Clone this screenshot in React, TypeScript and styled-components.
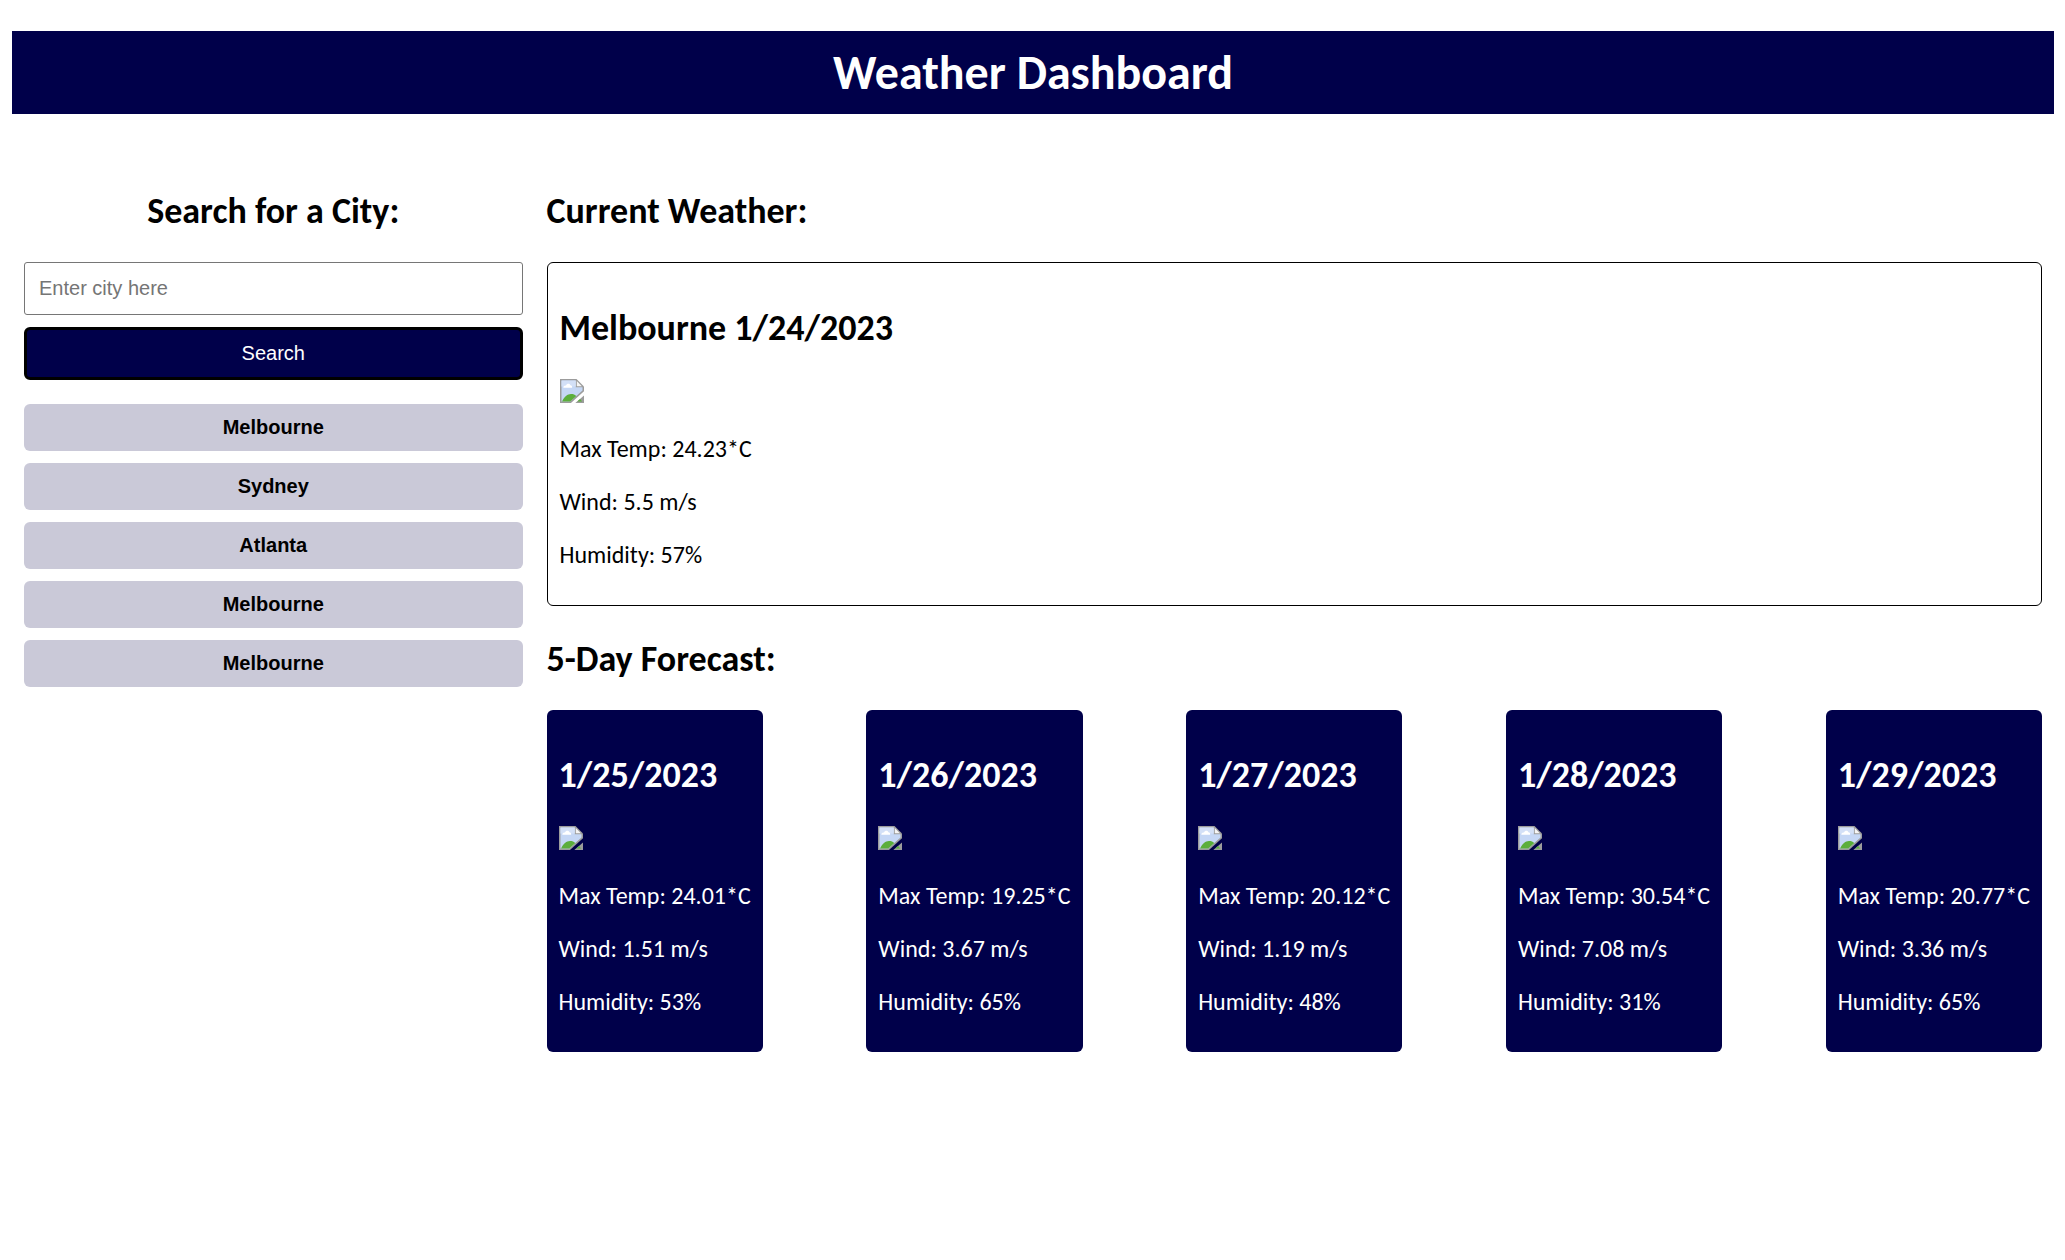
import React from "react";
import styled, { createGlobalStyle } from "styled-components";

const NAVY = "#00004a";

const GlobalStyle = createGlobalStyle`
  * { box-sizing: border-box; }
  body {
    margin: 0;
    padding: 0 11px 0 12px;
    background: #ffffff;
    color: #000000;
    font-family: Carlito, Lato, "Open Sans", sans-serif;
    font-size: 24px;
    line-height: 29px;
  }
`;

const Header = styled.header`
  margin-top: 31px;
  padding: 12px;
  background: ${NAVY};
  color: #ffffff;
  text-align: center;
`;

const PageTitle = styled.h1`
  margin: 0;
  font-size: 48px;
  line-height: 59px;
`;

const Layout = styled.main`
  display: grid;
  grid-template-columns: minmax(0, 1fr) minmax(0, 3fr);
  gap: 24px;
  margin-top: 32px;
  padding: 12px;
`;

const Column = styled.section`
  display: flex;
  flex-direction: column;
`;

const Title = styled.h2<{ $center?: boolean }>`
  margin: 31px 0 29px;
  font-size: 36px;
  line-height: 44px;
  text-align: ${(p) => (p.$center ? "center" : "left")};
`;

const SearchForm = styled.form`
  display: flex;
  flex-direction: column;
  gap: 12px;
`;

const CityInput = styled.input`
  width: 100%;
  height: 53px;
  padding: 0 14px;
  border: 1px solid #767676;
  border-radius: 3px;
  font-family: "Liberation Sans", Arial, sans-serif;
  font-size: 20px;

  &::placeholder {
    color: #757575;
  }
`;

const SearchButton = styled.button`
  height: 53px;
  border: 3px solid #000000;
  border-radius: 6px;
  background: ${NAVY};
  color: #ffffff;
  font-family: "Liberation Sans", Arial, sans-serif;
  font-size: 20px;
`;

const History = styled.div`
  display: flex;
  flex-direction: column;
  gap: 12px;
  margin-top: 24px;
`;

const HistoryButton = styled.button`
  height: 47px;
  border: 0;
  border-radius: 6px;
  background: #cac9d8;
  color: #000000;
  font-family: "Liberation Sans", Arial, sans-serif;
  font-size: 20px;
  font-weight: bold;
`;

const CurrentCard = styled.article`
  padding: 12px;
  border: 1px solid #000000;
  border-radius: 6px;
`;

const Forecast = styled.div`
  display: flex;
  justify-content: space-between;
`;

const DayCard = styled.article`
  padding: 12px;
  border-radius: 6px;
  background: ${NAVY};
  color: #ffffff;
  white-space: nowrap;
`;

const Icon = styled.svg`
  display: block;
  width: 24px;
  height: 24px;
  margin-bottom: 31px;
`;

const Reading = styled.p`
  margin: 24px 0;
`;

const WeatherIcon = () => (
  <Icon viewBox="0 0 16 16" role="img" aria-label="Weather">
    <path d="M0 0H11L16 5V8.2L7.3 16H0Z" fill="#9c9c9c" />
    <path d="M1 1H10.5V5.5H15V7.7L6.8 15H1Z" fill="#c5d7f5" />
    <path d="M1 1H10.5V5H1Z" fill="#d3e0f7" />
    <path d="M2.2 5.8C2.2 4.7 3.2 4.2 4 4.4C4.4 3 6.4 2.8 6.9 4.2C7.8 4.2 8.2 5 8.1 5.8Z" fill="#ffffff" />
    <path d="M1.4 15C2.8 11.8 5 10 7.3 10C8.9 10 10 10.4 10.9 11.4L6.8 15Z" fill="#5cae3c" />
    <path d="M11.2 1.4V4.8H14.6Z" fill="#f5f5f5" />
    <path d="M16 11V16H10.2Z" fill="#9c9c9c" />
    <path d="M13.4 13.4L14.8 15H11.5Z" fill="#5cae3c" />
  </Icon>
);

type Weather = { title: string; temp: string; wind: string; humidity: string };

const current: Weather = { title: "Melbourne 1/24/2023", temp: "24.23", wind: "5.5", humidity: "57" };

const days: Weather[] = [
  { title: "1/25/2023", temp: "24.01", wind: "1.51", humidity: "53" },
  { title: "1/26/2023", temp: "19.25", wind: "3.67", humidity: "65" },
  { title: "1/27/2023", temp: "20.12", wind: "1.19", humidity: "48" },
  { title: "1/28/2023", temp: "30.54", wind: "7.08", humidity: "31" },
  { title: "1/29/2023", temp: "20.77", wind: "3.36", humidity: "65" },
];

const cities = ["Melbourne", "Sydney", "Atlanta", "Melbourne", "Melbourne"];

const Readings = ({ weather }: { weather: Weather }) => (
  <>
    <Title>{weather.title}</Title>
    <WeatherIcon />
    <Reading>{`Max Temp: ${weather.temp}*C`}</Reading>
    <Reading>{`Wind: ${weather.wind} m/s`}</Reading>
    <Reading>{`Humidity: ${weather.humidity}%`}</Reading>
  </>
);

export default function App() {
  return (
    <>
      <GlobalStyle />
      <Header>
        <PageTitle>Weather Dashboard</PageTitle>
      </Header>
      <Layout>
        <Column>
          <Title $center>
            <label htmlFor="city">Search for a City:</label>
          </Title>
          <SearchForm onSubmit={(e) => e.preventDefault()}>
            <CityInput id="city" type="text" placeholder="Enter city here" />
            <SearchButton type="submit">Search</SearchButton>
          </SearchForm>
          <History>
            {cities.map((city, i) => (
              <HistoryButton key={i} type="button">
                {city}
              </HistoryButton>
            ))}
          </History>
        </Column>
        <Column>
          <Title>Current Weather:</Title>
          <CurrentCard>
            <Readings weather={current} />
          </CurrentCard>
          <Title>5-Day Forecast:</Title>
          <Forecast>
            {days.map((day) => (
              <DayCard key={day.title}>
                <Readings weather={day} />
              </DayCard>
            ))}
          </Forecast>
        </Column>
      </Layout>
    </>
  );
}
